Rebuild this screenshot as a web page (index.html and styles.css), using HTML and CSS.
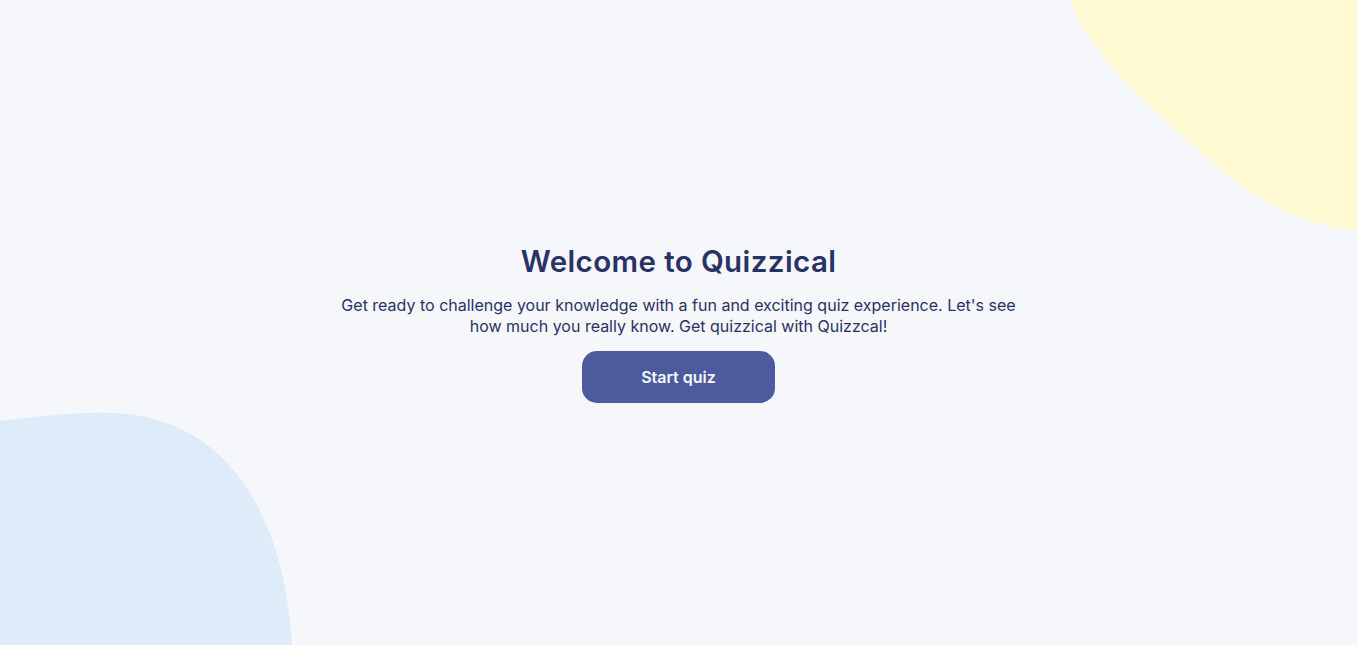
FILE: index.html
```html
<!DOCTYPE html>
<html lang="en">
<head>
<meta charset="utf-8">
<title>Quizzical</title>
<link rel="stylesheet" href="styles.css">
</head>
<body>
<svg class="blob blob-yellow" width="297" height="240" viewBox="0 0 297 240" aria-hidden="true">
  <path d="M10,0 C25,40 55,75 120,133 C170,180 205,208 257,223 C275,228 290,230 297,231 L297,0 Z" fill="#FFFAD1"/>
</svg>
<svg class="blob blob-blue" width="300" height="245" viewBox="0 0 300 245" aria-hidden="true">
  <path d="M0,21 C40,16 80,12 110,13 C205,14 282,85 292,245 L0,245 Z" fill="#DEEBF8"/>
</svg>
<main class="intro">
  <h1 class="intro-title">Welcome to Quizzical</h1>
  <p class="intro-text">Get ready to challenge your knowledge with a fun and exciting quiz experience. Let's see how much you really know. Get quizzical with Quizzcal!</p>
  <button class="start-btn">Start quiz</button>
</main>
</body>
</html>
```
FILE: styles.css
```css
html, body {
  margin: 0;
  padding: 0;
}
body {
  background: #F5F7FB;
  font-family: Inter, "Noto Sans", sans-serif;
  color: #293264;
  overflow: hidden;
  position: relative;
  min-height: 100vh;
}
.blob {
  position: absolute;
  display: block;
}
.blob-yellow {
  top: 0;
  right: 0;
}
.blob-blue {
  left: 0;
  bottom: 0;
}
.intro {
  position: relative;
  min-height: 100vh;
  display: flex;
  flex-direction: column;
  align-items: center;
  justify-content: center;
  text-align: center;
}
.intro-title {
  margin: 0;
  font-size: 29.5px;
  font-weight: 600;
  letter-spacing: 0.4px;
  color: #293264;
}
.intro-text {
  margin: 16px 0 14px;
  max-width: 690px;
  font-size: 16px;
  line-height: 21px;
  color: #293264;
}
.start-btn {
  width: 193px;
  height: 52px;
  border: none;
  border-radius: 15px;
  background: #4D5B9E;
  color: #F5F7FB;
  font-family: Inter, sans-serif;
  font-size: 16px;
  font-weight: 600;
  cursor: pointer;
}
```
